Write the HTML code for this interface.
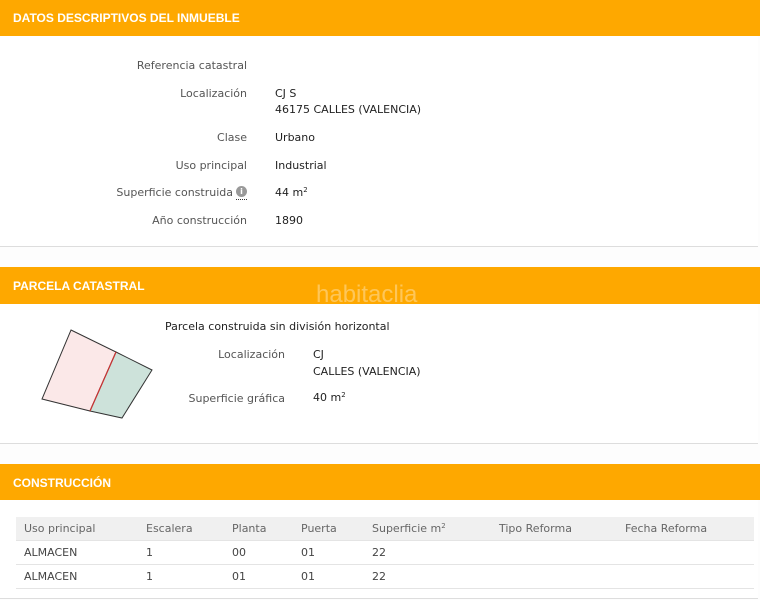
<!DOCTYPE html>
<html><head><meta charset="utf-8"><style>
body{margin:0;width:760px;height:600px;background:#fdfdfd;font-family:Verdana,"DejaVu Sans","Liberation Sans",sans-serif;font-size:11px;color:#222;overflow:hidden;position:relative}
.h{position:absolute;left:0;width:760px;background:#fea800;color:#fff;font-weight:bold;font-size:12px;font-family:"Liberation Sans",sans-serif}
.h span{position:absolute;left:13px;top:11px}
.c{position:absolute;left:0;width:758px;background:#fff;border-bottom:1px solid #ddd}
.l{position:absolute;color:#555;text-align:right;width:200px}
.v{position:absolute;color:#222;line-height:16px}
.s{font-size:7px;position:relative;top:-4px}
table{border-collapse:collapse;position:absolute;left:16px;top:517px;width:738px;font-size:11px;color:#444}
td{height:23px;border-bottom:1px solid #e4e4e4;padding:0 0 0 8px}
tr.th td{background:#f0f0f0;color:#666}
</style></head><body>
<div class="h" style="top:0;height:36px"><span>DATOS DESCRIPTIVOS DEL INMUEBLE</span></div>
<div class="c" style="top:36px;height:210px"></div>
<div class="l" style="left:47px;top:59px">Referencia catastral</div>
<div class="l" style="left:47px;top:87px">Localización</div>
<div class="v" style="left:275px;top:86px">CJ S<br>46175 CALLES (VALENCIA)</div>
<div class="l" style="left:47px;top:131px">Clase</div><div class="v" style="left:275px;top:130px">Urbano</div>
<div class="l" style="left:47px;top:159px">Uso principal</div><div class="v" style="left:275px;top:158px">Industrial</div>
<div class="l" style="left:33px;top:186px">Superficie construida</div>
<div style="position:absolute;left:236px;top:186px;width:11px;height:11px;border-radius:50%;background:#999;color:#fff;font-size:8px;text-align:center;line-height:11px;font-weight:bold">i</div>
<div style="position:absolute;left:236px;top:199px;width:11px;border-bottom:1px dotted #333"></div>
<div class="v" style="left:275px;top:185px">44 m<span class="s">2</span></div>
<div class="l" style="left:47px;top:214px">Año construcción</div><div class="v" style="left:275px;top:213px">1890</div>

<div class="h" style="top:267px;height:37px"><span style="top:12px">PARCELA CATASTRAL</span><span style="left:316px;top:14px;font-size:24px;font-weight:normal;color:rgba(255,255,255,.35)">habitaclia</span></div>
<div class="c" style="top:304px;height:139px"></div>
<svg style="position:absolute;left:0;top:300px" width="170" height="130"><polygon points="71,30 116,52 90,111 42,99" fill="#fbe8e8" stroke="#333" stroke-width="1"/><polygon points="116,52 152,70 122,118 90,111" fill="#cde2da" stroke="#333" stroke-width="1"/><line x1="116" y1="52" x2="90" y2="111" stroke="#c33" stroke-width="1.2"/></svg>
<div class="v" style="left:165px;top:319px">Parcela construida sin división horizontal</div>
<div class="l" style="left:85px;top:348px">Localización</div>
<div class="v" style="left:313px;top:347px">CJ<br><span style="position:relative;top:1px">CALLES (VALENCIA)</span></div>
<div class="l" style="left:85px;top:392px">Superficie gráfica</div>
<div class="v" style="left:313px;top:390px">40 m<span class="s">2</span></div>

<div class="h" style="top:464px;height:36px"><span style="top:12px">CONSTRUCCIÓN</span></div>
<div class="c" style="top:500px;height:98px"></div>
<table>
<tr class="th"><td style="width:114px">Uso principal</td><td style="width:78px">Escalera</td><td style="width:61px">Planta</td><td style="width:63px">Puerta</td><td style="width:119px">Superficie m<span class="s">2</span></td><td style="width:118px">Tipo Reforma</td><td>Fecha Reforma</td></tr>
<tr><td>ALMACEN</td><td>1</td><td>00</td><td>01</td><td>22</td><td></td><td></td></tr>
<tr><td>ALMACEN</td><td>1</td><td>01</td><td>01</td><td>22</td><td></td><td></td></tr>
</table>
</body></html>
